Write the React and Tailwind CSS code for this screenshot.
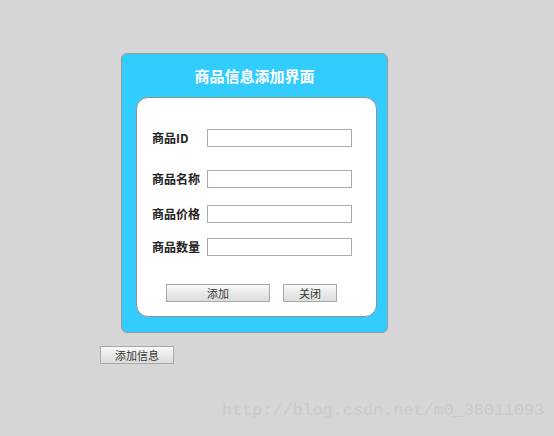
export default function App() {
  const rows = [
    { label: "商品ID", mt: "mt-[31px]" },
    { label: "商品名称", mt: "mt-[23px]" },
    { label: "商品价格", mt: "mt-[17px]" },
    { label: "商品数量", mt: "mt-[15px]" },
  ];

  return (
    <main
      className="relative w-[554px] h-[436px] overflow-hidden bg-[#d6d6d6]"
      style={{ fontFamily: '"Noto Sans CJK SC", "Noto Sans", sans-serif' }}
    >
      <div className="pt-[53px] pl-[121px]">
        <div className="w-[267px] h-[280px] rounded-[6px] border border-[#9a9a9a] bg-[#33ccff] flex flex-col">
          <div className="h-[43px] flex items-center justify-center text-white font-bold text-[15px] pt-[1px]">
            商品信息添加界面
          </div>
          <div className="ml-[14px] w-[241px] h-[220px] rounded-[12px] border border-[#8f8f8f] bg-white flex flex-col">
            {rows.map((row) => (
              <div key={row.label} className={`${row.mt} flex items-center h-[18px]`}>
                <span className="ml-[15px] w-[55px] text-[12px] font-bold text-[#222] leading-none">
                  {row.label}
                </span>
                <input
                  type="text"
                  className="w-[145px] h-[18px] border border-[#aaa] bg-white outline-none"
                />
              </div>
            ))}
            <div className="mt-[28px] flex items-center">
              <button className="ml-[29px] w-[104px] h-[18px] border border-[#a8a8a8] bg-gradient-to-b from-[#f8f8f8] to-[#dcdcdc] text-[11px] text-[#333] leading-none">
                添加
              </button>
              <button className="ml-[13px] w-[54px] h-[18px] border border-[#a8a8a8] bg-gradient-to-b from-[#f8f8f8] to-[#dcdcdc] text-[11px] text-[#333] leading-none">
                关闭
              </button>
            </div>
          </div>
        </div>
      </div>
      <div className="flex pl-[100px] pt-[13px]">
        <button className="w-[74px] h-[18px] border border-[#a8a8a8] bg-gradient-to-b from-[#f8f8f8] to-[#dcdcdc] text-[11px] text-[#333] leading-none">
          添加信息
        </button>
      </div>
      <div
        className="absolute left-[222px] top-[403px] text-[16.8px] text-[#cacaca] leading-none"
        style={{ fontFamily: '"Liberation Mono", "DejaVu Sans Mono", monospace' }}
      >
        http://blog.csdn.net/m0_38011093
      </div>
    </main>
  );
}
